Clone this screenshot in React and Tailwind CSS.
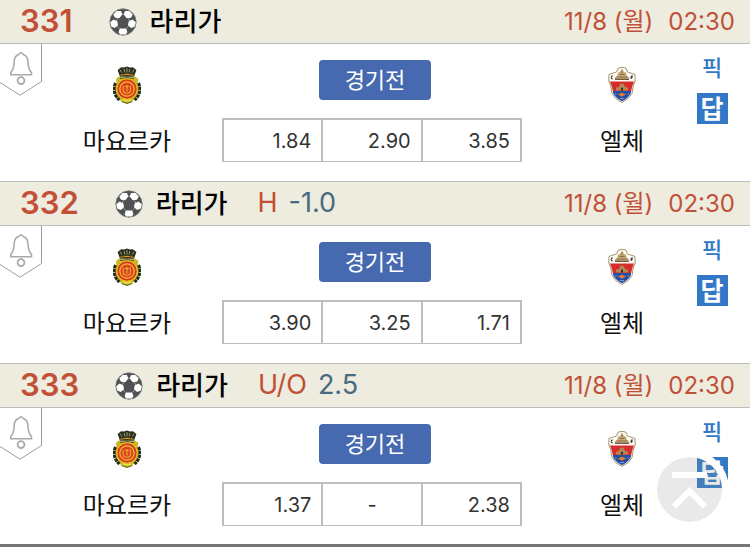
import React from 'react';

const games = [
    { no: '331', league: '라리가', date: '11/8 (월)', time: '02:30', home: '마요르카', away: '엘체', odds: ['1.84', '2.90', '3.85'] },
    { no: '332', league: '라리가', type: 'H', line: '-1.0', date: '11/8 (월)', time: '02:30', home: '마요르카', away: '엘체', odds: ['3.90', '3.25', '1.71'] },
    { no: '333', league: '라리가', type: 'U/O', line: '2.5', date: '11/8 (월)', time: '02:30', home: '마요르카', away: '엘체', odds: ['1.37', '-', '2.38'] },
];

const SoccerBall = () => (
    <svg width="28" height="28" viewBox="0 0 28 28" className="shrink-0" aria-hidden="true">
        <circle cx="14" cy="14" r="13.2" fill="#505152" stroke="#77787a" strokeWidth="0.8" />
        <g fill="#fff">
            <path d="M7.6 3 12 3 13.3 6.6 10.2 10.2 6 9.8 4.3 6.6Z" />
            <path d="M20.4 3 16 3 14.7 6.6 17.8 10.2 22 9.8 23.7 6.6Z" />
            <path d="M1.2 14.2 4.6 11.6 8.4 13.6 9 17.2 5.8 20 2.2 18.4Z" />
            <path d="M26.8 14.2 23.4 11.6 19.6 13.6 19 17.2 22.2 20 25.8 18.4Z" />
            <path d="M10.8 20.4 17.2 20.4 18.4 24.2 16.8 26.6 11.2 26.6 9.6 24.2Z" />
        </g>
        <path d="M13 6.2h2M8.6 10.4l-1.4 2.6M19.4 10.4l1.4 2.6M8.4 18.4l2.2 2M19.6 18.4l-2.2 2" stroke="#a5a5a5" strokeWidth="1" fill="none" />
    </svg>
);

const MallorcaCrest = () => (
    <svg width="28" height="38" viewBox="0 0 28 38" aria-hidden="true">
        <path d="M3 13 6 10.5 10 11.5 18 11.5 22 10.5 25.5 13 24.5 17 27 21 25.5 27 23 32 18 36 14 38 9.5 36 4.5 32 2.5 27 1 21 3.5 17Z" fill="#c9b821" />
        <path d="M2.6 17C-.2 22 .8 29 6.4 34M25.4 17c2.8 5 1.8 12-3.8 17" fill="none" stroke="#232b18" strokeWidth="3" strokeDasharray="3.4 .6" />
        <path d="M8.5 35.5 14 37.4l5.5-1.9" fill="none" stroke="#59631d" strokeWidth="1" />
        <path d="M4.6 4 8 1.2 11 1.6 14 .4 17 1.6 20 1.2 23.4 4 21 10.8H7Z" fill="#2b301c" />
        <path d="M7 3.6 8.8 6.6M11.2 3l.6 3.4M14 2v4.4M16.8 3l-.6 3.4M21 3.6 19.2 6.6" stroke="#b5b491" strokeWidth="0.8" />
        <path d="M7.4 9.2Q14 7.6 20.6 9.2" fill="none" stroke="#c9a42a" strokeWidth="1.1" />
        <circle cx="10.5" cy="8.4" r=".8" fill="#c63127" />
        <circle cx="17.5" cy="8.4" r=".8" fill="#c63127" />
        <path d="M7 12.6Q14 10.6 21 12.6" fill="none" stroke="#55501f" strokeWidth="1" />
        <circle cx="14" cy="23" r="10.2" fill="#d9391d" stroke="#efc12c" strokeWidth="1" />
        <circle cx="14" cy="23" r="7.2" fill="#db4423" stroke="#f3bf32" strokeWidth="1.2" />
        <path d="M10.2 20v4.2c0 4 7.2 4 7.2 0V19.5M14 19v6.5M11.8 20.5h4" fill="none" stroke="#f0a92e" strokeWidth="1.1" />
        <path d="M9.6 33.8q4.4 1.8 8.8 0" fill="none" stroke="#e7df46" strokeWidth="1.6" />
    </svg>
);

const ElcheCrest = () => (
    <svg width="28" height="38" viewBox="0 0 28 38" aria-hidden="true">
        <path d="M10 2.2Q14 .4 18 2.2L19.5 6 27 8.4 27.2 15 25.2 20 24 27.5Q21 33.5 14 36.4 7 33.5 4 27.5L2.8 20 .8 15 1 8.4 8.5 6Z" fill="#fdfcf6" stroke="#a4956a" strokeWidth="1" />
        <path d="M2 15.5h24l-1.8 5-1 4.5H4.8l-1-4.5Z" fill="#d62c2b" />
        <path d="M4.8 25h18.4l-.6 2.8Q19.6 32.7 14 35.2 8.4 32.7 5.4 27.8Z" fill="#234da6" />
        <path d="M9.2 9.8 10 6.5 12 6 14 2.6 16 6l2 .5.8 3.3 3.2 2.4H6Z" fill="#c8a978" />
        <path d="M7 12.4h14v1.6H7Z" fill="#77583a" />
        <path d="M11.4 8.5h5.2M14 4.5v3M8.6 11h10.8" stroke="#795d3b" strokeWidth=".8" />
        <path d="M4.9 10q-1.6-.5-1.7 1.4T4.9 12.9M23.2 13v-3h1.8M23.2 11.5h1.4" stroke="#222" strokeWidth="1" fill="none" />
        <path d="M8 24.6v-3h2.5v-1.4h1.3v-2.4h4.4v2.4h1.3v1.4H20v3Z" fill="#b28755" />
        <path d="M13 24.6v-2.8h2v2.8Z" fill="#3a2c28" />
        <path d="M9.8 28.6 12.4 27.4l1.4-.8 1.6.8 2.8 1.2-2.8 1.2-1.4.9-1.6-.9Z" fill="#ee7d2c" />
        <path d="M7 28h1.6M19.6 28H21M12 32.6h4" stroke="#8cb2dd" strokeWidth=".9" />
    </svg>
);

const AlarmRibbon = () => (
    <button type="button" aria-label="알림" className="h-[52px] w-[42px] shrink-0">
        <svg width="42" height="52" viewBox="0 0 42 52" fill="none">
            <path d="M41.5 0V37.5L20 51.2 0 38.5" stroke="#9b9b9b" strokeWidth="1" />
            <path d="M21 8.8C20 8.8 19.4 10 18.6 10.5 15.5 11.6 14.3 14 14.2 17.5 14.1 23 13.6 25.3 10.8 28.6V30.7H31.5V28.6C28.6 25.3 28 23 27.9 17.5 27.8 14 26.5 11.6 23.4 10.5 22.6 10 22 8.8 21 8.8Z" stroke="#aaa" strokeWidth="1.6" />
            <circle cx="21" cy="36.6" r="3.4" stroke="#aaa" strokeWidth="1.8" />
        </svg>
    </button>
);

const GameHeader = ({ game }) => (
    <header className="flex h-[45px] items-center justify-between whitespace-nowrap border-y border-[#bdbdbd] bg-[#eeebdf] pl-5 pr-[15px]">
        <div className="flex items-center">
            <span className="text-[31px] font-semibold text-[#c15036]">{game.no}</span>
            <span className="ml-9 flex items-center gap-[13px]">
                <SoccerBall />
                <h2 className="text-[26px] font-medium text-black">{game.league}</h2>
            </span>
            {game.type && (
                <span className="ml-[30px] flex gap-[11px] text-[27px]">
                    <span className="text-[#c15036]">{game.type}</span>
                    <span className="text-[#466a7f]">{game.line}</span>
                </span>
            )}
        </div>
        <div className="flex gap-[15px] text-[24px] text-[#c15036]">
            <span>{game.date}</span>
            <span>{game.time}</span>
        </div>
    </header>
);

const OddsTable = ({ odds }) => (
    <table className="mt-[18px] h-11 w-full table-fixed border-collapse border-2 border-b border-[#bdbdbd]" aria-label="배당률">
        <tbody>
            <tr>
                {odds.map((odd, i) => (
                    <td key={i} className={`border-x-2 border-[#bdbdbd] px-[10px] text-[20px] leading-6 text-[#333] ${odd === '-' ? 'text-center' : 'text-right'}`}>
                        {odd}
                    </td>
                ))}
            </tr>
        </tbody>
    </table>
);

const GameCard = ({ game }) => (
    <article>
        <GameHeader game={game} />
        <div className="grid grid-cols-[222fr_300fr_152fr_76fr] pb-[19px]">
            <div className="flex">
                <AlarmRibbon />
                <div className="flex flex-1 flex-col items-center pr-[10px] pt-[22px]">
                    <MallorcaCrest />
                    <span className="mt-5 whitespace-nowrap text-[24px] leading-9 text-[#111]">{game.home}</span>
                </div>
            </div>
            <div className="flex flex-col items-center pt-4">
                <div className="flex w-full justify-center pl-[6px]">
                    <button type="button" className="h-10 w-28 rounded bg-[#4669af] text-[22px] leading-8 text-white">경기전</button>
                </div>
                <OddsTable odds={game.odds} />
            </div>
            <div className="flex flex-col items-center pl-12 pt-[22px]">
                <ElcheCrest />
                <span className="mt-5 whitespace-nowrap text-[24px] leading-9 text-[#111]">{game.away}</span>
            </div>
            <div className="flex flex-col items-center gap-[9px] pt-2 text-[#3179c6]">
                <button type="button" className="text-[22px] font-medium leading-8">픽</button>
                <button type="button" className="h-[31px] w-[31px] bg-[#3179c6] text-[25px] font-bold leading-7 text-white">답</button>
            </div>
        </div>
    </article>
);

const TopButton = () => (
    <button
        type="button"
        aria-label="맨 위로"
        onClick={() => window.scrollTo({ top: 0 })}
        className="fixed bottom-[18px] right-[21px] h-[79px] w-[79px] rounded-full border-[7px] border-white bg-[#939393]/20 bg-clip-padding"
    >
        <svg width="65" height="65" viewBox="0 0 65 65" fill="none" stroke="#fff" strokeWidth="6">
            <path d="M15 18H50M17 49.5 32.5 34 48 49.5" />
        </svg>
    </button>
);

const App = () => (
    <main className="min-h-screen overflow-hidden bg-white font-['Inter','Noto_Sans_CJK_KR',sans-serif]">
        <div className="-mt-px">
            {games.map((game) => (
                <GameCard key={game.no} game={game} />
            ))}
        </div>
        <hr className="-mt-px h-[3px] border-0 bg-[#777475]" />
        <TopButton />
    </main>
);

export default App;
